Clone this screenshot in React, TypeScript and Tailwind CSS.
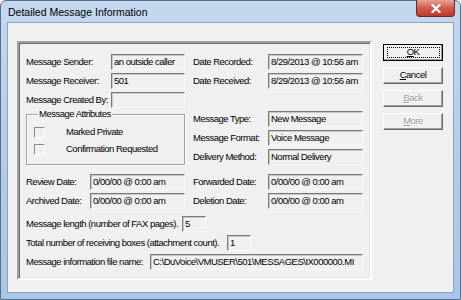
const ui = "font-['Liberation_Sans',sans-serif] text-[9.5px] tracking-[-0.5px]";

function Field({ value, w }: { value?: string; w: string }) {
  return (
    <div
      className={`${w} h-[16px] shrink-0 flex items-center pl-[2px] bg-[#f0f0f0] border border-t-[#7a7a7a] border-l-[#7a7a7a] border-b-[#f8f8f8] border-r-[#f8f8f8] shadow-[inset_1px_1px_0_#c8c8c8] whitespace-nowrap overflow-hidden`}
    >
      {value}
    </div>
  );
}

function Row({ label, lw, value, iw }: { label: string; lw: string; value?: string; iw: string }) {
  return (
    <div className="flex items-center">
      <span className={`${lw} shrink-0 whitespace-nowrap`}>{label}</span>
      <Field value={value} w={iw} />
    </div>
  );
}

function Check({ label }: { label: string }) {
  return (
    <div className="flex items-center h-[11px]">
      <div className="w-[11px] h-[11px] border border-t-[#8a8a8a] border-l-[#8a8a8a] border-b-white border-r-white bg-[#f0f0f0]" />
      <span className="ml-[21px] whitespace-nowrap">{label}</span>
    </div>
  );
}

function Btn({ children, disabled, primary }: { children: React.ReactNode; disabled?: boolean; primary?: boolean }) {
  return (
    <div
      className={`w-[60px] h-[17px] flex items-center justify-center bg-[#f0f0f0] border ${
        primary ? "border-black" : "border-t-white border-l-white border-b-[#696969] border-r-[#696969]"
      } shadow-[inset_-1px_-1px_0_#a0a0a0]`}
    >
      <span
        className={`${primary ? "w-[53px] h-[11px] border border-dotted border-black flex items-center justify-center" : ""} ${
          disabled ? "text-[#a0a0a0] [text-shadow:1px_1px_0_#ffffff]" : "text-black"
        }`}
      >
        {children}
      </span>
    </div>
  );
}

export default function App() {
  return (
    <div className={`w-[461px] h-[300px] overflow-hidden bg-white ${ui} text-black`}>
      <div className="w-full h-full flex flex-col rounded-t-[6px] border border-[#5a6f88] bg-gradient-to-b from-[#c4d8ef] via-[#b3cdea] to-[#a8c6e8] px-[6px] pb-[6px]">
        {/* Title bar */}
        <div className="h-[21px] flex items-start justify-between shrink-0">
          <span className="pt-[4px] pl-[1px] text-[10.5px] tracking-normal text-black">
            Detailed Message Information
          </span>
          <div className="-mt-[1px] mr-[-1px] w-[39px] h-[17px] rounded-b-[4px] border border-[#6b2a22] border-t-0 bg-gradient-to-b from-[#e6a195] via-[#cf5a4b] to-[#c0392b] flex items-center justify-center">
            <svg width="10" height="9" viewBox="0 0 10 9">
              <path d="M1.5 1 L8.5 8 M8.5 1 L1.5 8" stroke="#ffffff" strokeWidth="2.2" strokeLinecap="square" />
            </svg>
          </div>
        </div>

        {/* Client area */}
        <div className="flex-1 flex bg-[#f0f0f0] border border-[#8da2bd] pl-[9px] pt-[18px]">
          {/* Sunken frame */}
          <div className="w-[355px] h-[239px] border-2 border-t-[#a0a0a0] border-l-[#a0a0a0] border-b-white border-r-white shadow-[inset_1px_1px_0_#696969,inset_-1px_-1px_0_#e3e3e3]">
            <div className="pl-[7px] pt-[11px] flex flex-col">
              {/* Sender / recorded */}
              <div className="flex gap-[8px]">
                <Row label="Message Sender:" lw="w-[85px]" value="an outside caller" iw="w-[74px]" />
                <Row label="Date Recorded:" lw="w-[75px]" value="8/29/2013 @ 10:56 am" iw="w-[95px]" />
              </div>
              <div className="flex gap-[8px] mt-[3px]">
                <Row label="Message Receiver:" lw="w-[85px]" value="501" iw="w-[74px]" />
                <Row label="Date Received:" lw="w-[75px]" value="8/29/2013 @ 10:56 am" iw="w-[95px]" />
              </div>
              <div className="flex mt-[3px]">
                <Row label="Message Created By:" lw="w-[85px]" iw="w-[74px]" />
              </div>

              {/* Attributes / type */}
              <div className="flex gap-[8px]">
                <fieldset className="w-[159px] h-[57px] border border-[#a0a0a0] shadow-[1px_1px_0_#ffffff,inset_1px_1px_0_#ffffff] pt-[7px] pl-[7px] flex flex-col gap-[6px]">
                  <legend className="ml-[4px] px-[1px] leading-[12px]">Message Attributes</legend>
                  <Check label="Marked Private" />
                  <Check label="Confirmation Requested" />
                </fieldset>
                <div className="flex flex-col gap-[3px] pt-[3px]">
                  <Row label="Message Type:" lw="w-[75px]" value="New Message" iw="w-[95px]" />
                  <Row label="Message Format:" lw="w-[75px]" value="Voice Message" iw="w-[95px]" />
                  <Row label="Delivery Method:" lw="w-[75px]" value="Normal Delivery" iw="w-[95px]" />
                </div>
              </div>

              {/* Dates */}
              <div className="flex gap-[8px] mt-[9px]">
                <Row label="Review Date:" lw="w-[64px]" value="0/00/00 @ 0:00 am" iw="w-[95px]" />
                <Row label="Forwarded Date:" lw="w-[75px]" value="0/00/00 @ 0:00 am" iw="w-[95px]" />
              </div>
              <div className="flex gap-[8px] mt-[3px]">
                <Row label="Archived Date:" lw="w-[64px]" value="0/00/00 @ 0:00 am" iw="w-[95px]" />
                <Row label="Deletion Date:" lw="w-[75px]" value="0/00/00 @ 0:00 am" iw="w-[95px]" />
              </div>

              {/* Bottom rows */}
              <div className="mt-[7px]">
                <Row label="Message length (number of FAX pages)." lw="w-[156px]" value="5" iw="w-[24px]" />
              </div>
              <div className="mt-[3px]">
                <Row label="Total number of receiving boxes (attachment count)." lw="w-[201px]" value="1" iw="w-[24px]" />
              </div>
              <div className="mt-[3px]">
                <Row
                  label="Message information file name:"
                  lw="w-[124px]"
                  value="C:\DuVoice\VMUSER\501\MESSAGES\IX000000.MI"
                  iw="w-[213px]"
                />
              </div>
            </div>
          </div>

          {/* Buttons */}
          <div className="ml-[11px] mt-[3px] flex flex-col gap-[6px]">
            <Btn primary>
              <span className="underline">O</span>K
            </Btn>
            <Btn>
              <span className="underline">C</span>ancel
            </Btn>
            <Btn disabled>
              <span className="underline">B</span>ack
            </Btn>
            <Btn disabled>
              <span className="underline">M</span>ore
            </Btn>
          </div>
        </div>
      </div>
    </div>
  );
}
